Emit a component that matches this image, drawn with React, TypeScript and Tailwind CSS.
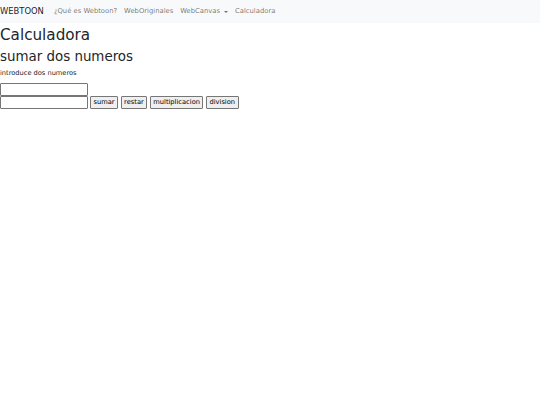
const links = ['¿Qué es Webtoon?', 'WebOriginales'];

function Btn({ label }: { label: string }) {
  return (
    <button className="h-[13px] px-[2.5px] border border-[#767676] bg-[#efefef] text-[6.7px] leading-none text-black rounded-[1px]">
      {label}
    </button>
  );
}

export default function App() {
  return (
    <div className="min-h-[405px] bg-white text-[#212529] font-['DejaVu_Sans',sans-serif]">
      <nav className="h-[23px] bg-[#f8f9fa] flex items-center">
        <span className="text-[8.4px] text-black/90 mr-[10px]">WEBTOON</span>
        <div className="flex items-center gap-[7px] text-[6.8px] text-black/55">
          {links.map((l) => (
            <span key={l}>{l}</span>
          ))}
          <span className="flex items-center">
            WebCanvas
            <span className="ml-[4px] inline-block border-t-[2.5px] border-t-current border-x-[2.5px] border-x-transparent" />
          </span>
          <span>Calculadora</span>
        </div>
      </nav>
      <h1 className="text-[15.2px] leading-[18px] font-normal mt-[3px]">Calculadora</h1>
      <h2 className="text-[13.4px] leading-[16px] font-normal mt-[5px]">sumar dos numeros</h2>
      <p className="text-[6.65px] leading-[10px] mt-[3px]">introduce dos numeros</p>
      <div className="mt-[5px] flex flex-col">
        <input className="w-[88px] h-[13px] border border-[#767676] rounded-[1px]" />
        <div className="flex items-end gap-[2.5px]">
          <input className="w-[88px] h-[13px] border border-[#767676] rounded-[1px] mr-[-0.5px]" />
          <Btn label="sumar" />
          <Btn label="restar" />
          <Btn label="multiplicacion" />
          <Btn label="division" />
        </div>
      </div>
    </div>
  );
}
